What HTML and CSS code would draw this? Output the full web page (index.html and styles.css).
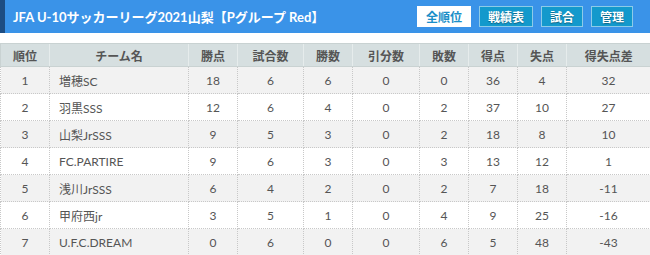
FILE: index.html
```html
<!DOCTYPE html>
<html lang="ja">
<head>
<meta charset="utf-8">
<link rel="stylesheet" href="styles.css">
</head>
<body>
<div class="topbar">
  <h1 class="title">JFA U-10サッカーリーグ2021山梨【Pグループ Red】</h1>
  <nav class="btns">
    <a class="btn btn-active">全順位</a>
    <a class="btn">戦績表</a>
    <a class="btn">試合</a>
    <a class="btn">管理</a>
  </nav>
</div>
<table class="standings">
  <colgroup>
    <col style="width:49px"><col style="width:139px"><col style="width:49px"><col style="width:66px"><col style="width:49px">
    <col style="width:67px"><col style="width:49px"><col style="width:49px"><col style="width:49px"><col style="width:84px">
  </colgroup>
  <thead>
    <tr><th>順位</th><th>チーム名</th><th>勝点</th><th>試合数</th><th>勝数</th><th>引分数</th><th>敗数</th><th>得点</th><th>失点</th><th>得失点差</th></tr>
  </thead>
  <tbody>
    <tr><td>1</td><td class="team">増穂SC</td><td>18</td><td>6</td><td>6</td><td>0</td><td>0</td><td>36</td><td>4</td><td>32</td></tr>
    <tr><td>2</td><td class="team">羽黒SSS</td><td>12</td><td>6</td><td>4</td><td>0</td><td>2</td><td>37</td><td>10</td><td>27</td></tr>
    <tr><td>3</td><td class="team">山梨JrSSS</td><td>9</td><td>5</td><td>3</td><td>0</td><td>2</td><td>18</td><td>8</td><td>10</td></tr>
    <tr><td>4</td><td class="team">FC.PARTIRE</td><td>9</td><td>6</td><td>3</td><td>0</td><td>3</td><td>13</td><td>12</td><td>1</td></tr>
    <tr><td>5</td><td class="team">浅川JrSSS</td><td>6</td><td>4</td><td>2</td><td>0</td><td>2</td><td>7</td><td>18</td><td>-11</td></tr>
    <tr><td>6</td><td class="team">甲府西jr</td><td>3</td><td>5</td><td>1</td><td>0</td><td>4</td><td>9</td><td>25</td><td>-16</td></tr>
    <tr><td>7</td><td class="team">U.F.C.DREAM</td><td>0</td><td>6</td><td>0</td><td>0</td><td>6</td><td>5</td><td>48</td><td>-43</td></tr>
  </tbody>
</table>
</body>
</html>
```
FILE: styles.css
```css
html, body {
  margin: 0;
  padding: 0;
  background: #fff;
}
body {
  width: 650px;
  font-family: Lato, "Noto Sans CJK JP", sans-serif;
  color: #555;
}
.topbar {
  height: 33px;
  box-sizing: border-box;
  background: #3a93e8;
  border-left: 5px solid #1d4d82;
  display: flex;
  align-items: center;
  justify-content: space-between;
  padding: 0 17px 0 8px;
}
.title {
  margin: 0;
  font-size: 13px;
  font-weight: bold;
  color: #fff;
  white-space: nowrap;
}
.btns {
  display: flex;
  gap: 8px;
}
.btn {
  display: flex;
  align-items: center;
  height: 21px;
  box-sizing: border-box;
  padding: 0 8px;
  border: 1px solid #8ccbe8;
  background: #1399cc;
  color: #fff;
  font-size: 12px;
  font-weight: bold;
  text-shadow: 0 1px 1px rgba(0,0,0,0.35);
}
.btn-active {
  background: #fff;
  color: #1a8ec8;
  border-color: #fff;
  text-shadow: none;
}
.standings {
  margin-top: 10px;
  width: 650px;
  table-layout: fixed;
  border-collapse: collapse;
  font-size: 12px;
}
.standings th {
  height: 22px;
  padding: 0;
  background: #d6dfe0;
  color: #555;
  font-weight: bold;
  font-size: 12px;
  border-left: 1px solid #e6ecec;
  border-top: 1px solid #c9d2d2;
  border-bottom: 1px solid #c9d2d2;
}
.standings th:first-child { border-left: 1px solid #c9d2d2; }
.standings td {
  height: 26px;
  padding: 0;
  text-align: center;
  border: 1px dotted #c8c8c8;
}
.standings td.team {
  text-align: left;
  padding-left: 9px;
}
.standings tbody tr:nth-child(odd) td { background: #f2f2f2; }
.standings tbody tr:nth-child(even) td { background: #fff; }
```
